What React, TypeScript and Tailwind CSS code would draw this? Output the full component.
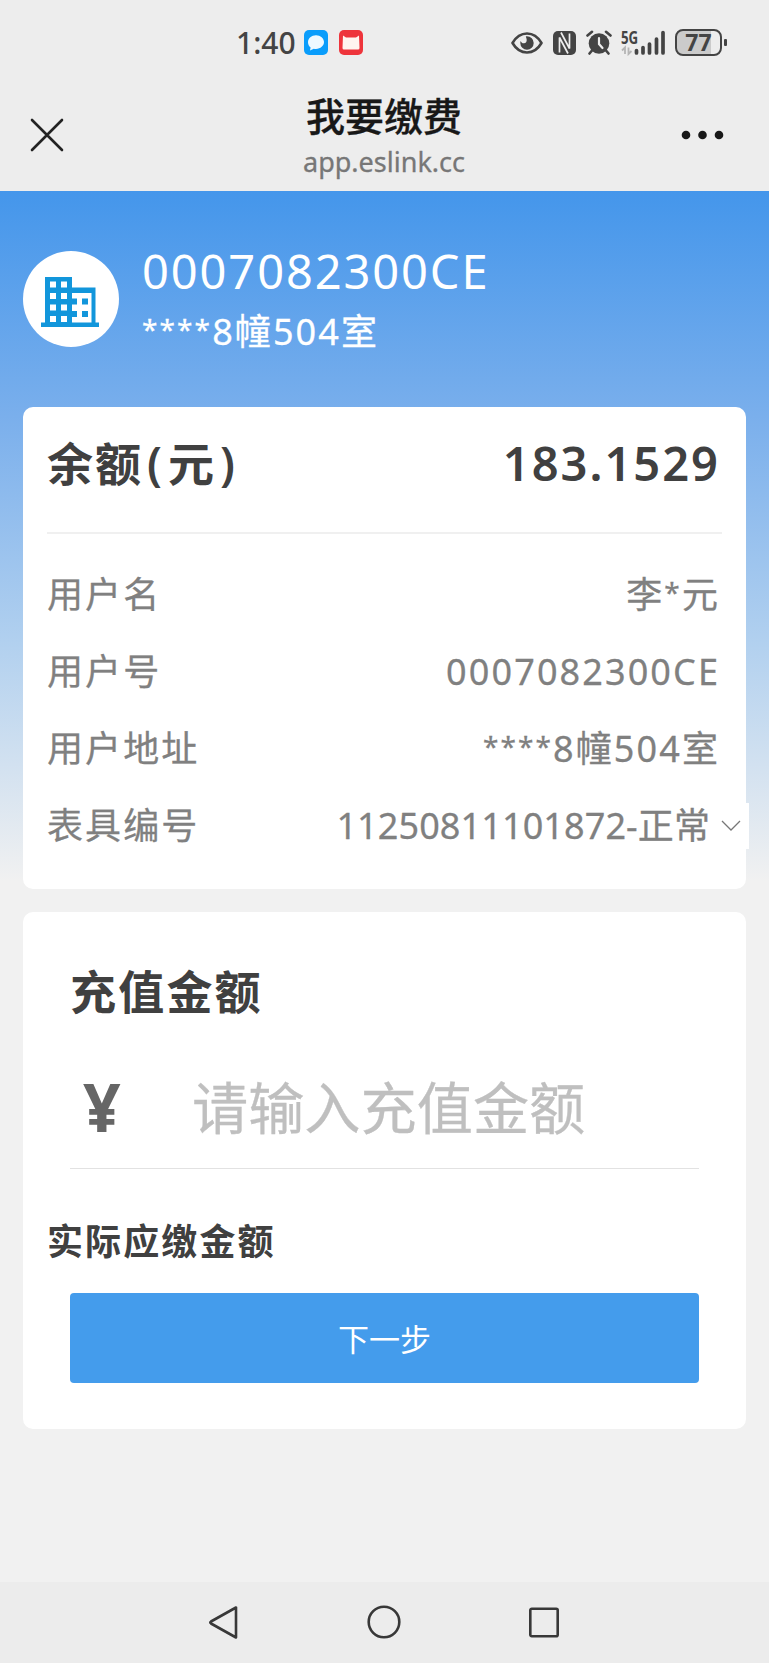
import { useState } from 'react';

const infoRows = [
    { label: '用户名', value: '李*元' },
    { label: '用户号', value: '0007082300CE' },
    { label: '用户地址', value: '****8幢504室' },
];

// asterisks of masked values are smaller and raised
function Masked({ text }: { text: string }) {
    return (
        <span>
            {text.split(/(\*+)/).map((part, i) => (
                part.startsWith('*') ? <span key={i} className="align-[5px] text-[28px] leading-none">{part}</span> : part
            ))}
        </span>
    );
}

function StatusBar() {
    return (
        <div className="flex h-[85px] items-start justify-between pt-[28px] pl-[236px] pr-[42px] text-[#444]">
            <div className="flex h-[29px] items-center">
                <span className="w-[68px] text-[30px] leading-[30px] font-medium">1:40</span>
                <svg className="h-[25px] w-[24px]" viewBox="0 0 24 25">
                    <rect width="24" height="25" rx="5" fill="#0a9dfb" />
                    <path d="M12 5.200c-4.500 0-8 3-8 7 0 2.200 1 4 2.600 5.300L6 20.600l3.800-1.900c.7.1 1.400.2 2.200.2 4.500 0 8-3 8-6.800 0-3.900-3.500-6.900-8-6.900z" fill="#eef9ff" />
                </svg>
                <svg className="ml-[11px] h-[25px] w-[24px]" viewBox="0 0 24 25">
                    <rect width="24" height="25" rx="5" fill="#ee343b" />
                    <path d="M4 5.500 7 7.500h10l3-2 .5 12.500q0 1.500-1.500 1.500H5q-1.500 0-1.500-1.500z" fill="#fff4ef" />
                </svg>
            </div>

            <div className="flex h-[29px] items-center">
                <svg className="h-[22px] w-[32px]" viewBox="0 0 32 22" fill="none">
                    <path d="M1.500 11C5 5 10 1.500 16 1.500S27 5 30.500 11C27 17 22 20.500 16 20.500S5 17 1.500 11z" stroke="#444" strokeWidth="2.600" strokeLinejoin="round" />
                    <path d="M16 4.300A6.700 6.700 0 1 1 9.300 11c0-.8.100-1.300.4-2 .7 1.700 2 2.600 3.500 2.300 2.400-.5 3.400-3 1.600-6.900.4-.1.800-.1 1.200-.1z" fill="#444" />
                </svg>
                <svg className="ml-[10px] h-[24px] w-[23px]" viewBox="0 0 23 24">
                    <rect width="23" height="24" rx="5" fill="#444" />
                    <path d="M6.500 21.500V6.500L15 22.500M16.500 2.500v15L8 1.500" fill="none" stroke="#ededed" strokeWidth="1.700" strokeLinejoin="bevel" />
                </svg>
                <svg className="ml-[10px] h-[25px] w-[26px]" viewBox="0 0 26 25" fill="none">
                    <circle cx="13" cy="13.500" r="10.300" fill="#444" />
                    <path d="M1.500 5.500 6 1.800M24.500 5.500 20 1.800M6 20.500 3.500 23.500M20 20.500l2.500 3" stroke="#444" strokeWidth="2.600" strokeLinecap="round" />
                    <path d="M13 8v6l3.500 4" stroke="#ededed" strokeWidth="2.200" strokeLinecap="round" />
                </svg>
                <div className="relative ml-[9px] h-[27px] w-[46px]">
                    <svg className="h-[27px] w-[46px]" viewBox="0 0 46 27">
                        <path d="M4 25v-6.500l-3 3M7.500 18.500V25l3-3" fill="none" stroke="#b5b5b5" strokeWidth="1.800" />
                        <path d="M15.500 21.500V24M22 18.500V24M28.500 15v9M35.500 10v14M42 3.500V24" stroke="#444" strokeWidth="3.700" strokeLinecap="round" />
                    </svg>
                    <span className="absolute top-[-1px] left-0 origin-left scale-x-[0.76] text-[17.500px] leading-[18px] font-bold">5G</span>
                </div>
                <div className="ml-[8px] flex h-[27px] w-[47px] items-center justify-center rounded-[8px] border-2 border-[#444] bg-[linear-gradient(90deg,#cbcbcb_78%,#ededed_78%)] text-[23px] leading-none font-bold">
                    77
                </div>
                <div className="ml-[2px] h-[7px] w-[3px] rounded-[1px] bg-[#444]" />
            </div>
        </div>
    );
}

function TitleBar() {
    return (
        <div className="flex h-[106px] items-start justify-between pr-[45px] pl-[30px]">
            <svg className="mt-[33px] h-[34px] w-[84px]" viewBox="0 0 84 34">
                <path d="M2 2l30 30M32 2 2 32" stroke="#222" strokeWidth="2.600" strokeLinecap="round" />
            </svg>
            <div className="flex flex-col items-center pl-[14px]">
                <h1 className="mt-[6px] text-[39px] leading-[50px] font-medium text-[#181818] [-webkit-text-stroke:0.3px_#181818]">我要缴费</h1>
                <p className="mt-[2px] text-[27px] leading-[38px] text-[#777] [-webkit-text-stroke:0.3px_#777]">app.eslink.cc</p>
            </div>
            <svg className="mt-[44px] h-[12px] w-[84px]" viewBox="0 0 84 12" fill="#181818">
                <circle cx="46" cy="6" r="4.300" />
                <circle cx="62.500" cy="6" r="4.300" />
                <circle cx="79" cy="6" r="4.300" />
            </svg>
        </div>
    );
}

function BuildingIcon() {
    return (
        <svg className="h-[50px] w-[58px]" viewBox="0 0 58 50">
            <path d="M4 0h27v10.500h23.500V45.500H58V50H0v-4.500h4z" fill="#1296db" />
            <path d="M9 4.500h6v6H9zM20 4.500h6v6h-6zM9 16h6v6H9zM20 16h6v6h-6zM9 27.500h6v6H9zM20 27.500h6v6h-6zM9 39h6v6H9zM20 39h6v6h-6z" fill="#fff" />
            <path d="M31 16h19.500v29.500H31z" fill="#fff" />
            <path d="M31 21.500h5v6h-5zM41 21.500h6v6h-6zM31 34h5v6h-5zM41 34h6v6h-6z" fill="#1296db" />
        </svg>
    );
}

export default function App() {
    const [amount, setAmount] = useState('');

    return (
        <main className="flex h-[1663px] w-[769px] flex-col overflow-hidden bg-[#f1f1f1] font-['Noto_Sans','Noto_Sans_CJK_SC',sans-serif]">
            <header className="h-[191px] shrink-0 bg-[#ededed]">
                <StatusBar />
                <TitleBar />
            </header>

            <div className="flex-1 bg-[linear-gradient(180deg,#4496eb_0px,#7aafec_225px,#b1d0ef_450px,#f1f1f1_690px)] px-[23px]">
                <div className="flex h-[216px] items-start pt-[60px] text-white">
                    <div className="flex size-[96px] items-center justify-center rounded-full bg-white pt-[5px] pr-[2px]">
                        <BuildingIcon />
                    </div>
                    <div className="ml-[23px]">
                        <p className="-mt-[8px] text-[47px] leading-[56px] tracking-[1.900px]">0007082300CE</p>
                        <p className="mt-[8px] text-[36px] leading-[50px] tracking-[2.100px] [-webkit-text-stroke:0.3px_white]"><Masked text="****8幢504室" /></p>
                    </div>
                </div>

                <section className="h-[482px] rounded-[10px] bg-white px-[24px]">
                    <div className="flex h-[127px] items-center justify-between border-b-2 border-[#f0f0f0] pr-[2px] pb-[14px] font-semibold text-[#404040]">
                        <span className="text-[46px] leading-[60px] tracking-[2px]">
                            余额<span className="mx-[4px]">(</span>元<span className="ml-[4px]">)</span>
                        </span>
                        <span className="text-[47px] leading-[60px] tracking-[2px]">183.1529</span>
                    </div>
                    <div className="pt-[22px] pr-[2px] text-[36px] text-[#808080]">
                        {infoRows.map(row => (
                            <div key={row.label} className="flex h-[77px] items-center justify-between tracking-[2.100px] [-webkit-text-stroke:0.3px_#808080]">
                                <span>{row.label}</span>
                                <Masked text={row.value} />
                            </div>
                        ))}
                        <div className="flex h-[77px] items-center justify-between [-webkit-text-stroke:0.3px_#808080]">
                            <span className="tracking-[2.100px]">表具编号</span>
                            <div className="-mr-[29px] flex h-[46px] items-center bg-white pr-[8px]">
                                <span className="tracking-[0.100px]">11250811101872-正常</span>
                                <svg className="ml-[11px] h-[11px] w-[20px]" viewBox="0 0 20 11">
                                    <path d="M1 1l9 9 9-9" fill="none" stroke="#777" strokeWidth="1.300" />
                                </svg>
                            </div>
                        </div>
                    </div>
                </section>

                <section className="mt-[23px] h-[517px] rounded-[10px] bg-white px-[47px] pt-[49px]">
                    <h2 className="text-[46px] leading-[60px] font-bold tracking-[2.200px] text-[#404040]">充值金额</h2>
                    <div className="mt-[31px] flex h-[117px] items-center border-b border-[#e2e2e2] pb-[6px]">
                        <span className="-mt-[3px] w-[122px] pl-[13px] text-[66px] leading-[80px] font-bold text-[#666]">¥</span>
                        <input
                            className="h-[80px] w-[480px] bg-transparent text-[56.200px] text-[#404040] outline-none placeholder:text-[#bfbfbf] placeholder:[-webkit-text-stroke:0.3px_#bfbfbf]"
                            placeholder="请输入充值金额"
                            value={amount}
                            onChange={(e) => setAmount(e.target.value)}
                        />
                    </div>
                    <p className="mt-[48px] -ml-[23px] text-[36px] leading-[50px] font-bold tracking-[2.100px] text-[#404040]">实际应缴金额</p>
                    <button className="mt-[26px] h-[90px] w-full rounded-[4px] bg-[#449cec] pt-[3px] text-[31px] text-white">
                        下一步
                    </button>
                </section>
            </div>

            <nav className="flex h-[81px] shrink-0 items-center justify-center gap-[126px] bg-[#ececec] pr-[1px] pb-[2px]">
                <svg className="size-[34px]" viewBox="0 0 34 34">
                    <path d="M29 2.500v30L4 18.500q-1.500-1 0-2z" fill="none" stroke="#383838" strokeWidth="2.600" strokeLinejoin="round" />
                </svg>
                <svg className="size-[34px]" viewBox="0 0 34 34">
                    <circle cx="17" cy="17" r="15.300" fill="none" stroke="#383838" strokeWidth="2.600" />
                </svg>
                <svg className="size-[34px]" viewBox="0 0 34 34">
                    <rect x="3.300" y="3.800" width="27.400" height="27.400" rx="1.500" fill="none" stroke="#383838" strokeWidth="2.600" />
                </svg>
            </nav>
        </main>
    );
}
